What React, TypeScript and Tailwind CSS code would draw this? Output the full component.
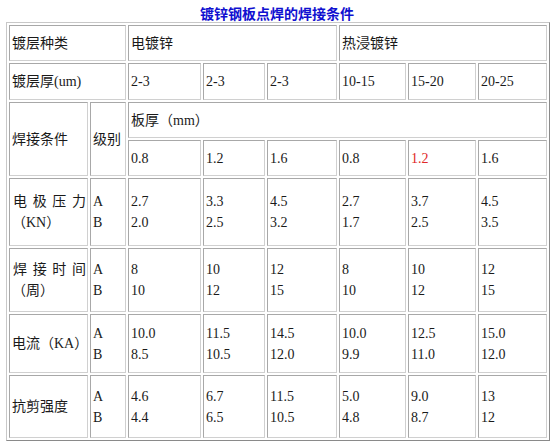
const cell =
  "flex flex-col justify-center pl-[2px] border border-t-[#a8a8a8] border-l-[#a8a8a8] border-b-[#d0d0d0] border-r-[#d0d0d0] bg-white";

const thicknesses = ["2-3", "2-3", "2-3", "10-15", "15-20", "20-25"];
const plates = ["0.8", "1.2", "1.6", "0.8", "1.2", "1.6"];

const rows = [
  { label: ["电极压力", "（KN）"], spread: true, vals: [["2.7", "2.0"], ["3.3", "2.5"], ["4.5", "3.2"], ["2.7", "1.7"], ["3.7", "2.5"], ["4.5", "3.5"]] },
  { label: ["焊接时间", "（周）"], spread: true, vals: [["8", "10"], ["10", "12"], ["12", "15"], ["8", "10"], ["10", "12"], ["12", "15"]] },
  { label: ["电流（KA）"], spread: false, vals: [["10.0", "8.5"], ["11.5", "10.5"], ["14.5", "12.0"], ["10.0", "9.9"], ["12.5", "11.0"], ["15.0", "12.0"]] },
  { label: ["抗剪强度"], spread: false, vals: [["4.6", "4.4"], ["6.7", "6.5"], ["11.5", "10.5"], ["5.0", "4.8"], ["9.0", "8.7"], ["13", "12"]] },
];

export default function App() {
  return (
    <div
      className="w-[554px] h-[445px] bg-white text-[#1a1a1a] text-[14px] leading-[21px] overflow-hidden"
      style={{ fontFamily: '"Liberation Serif", "Noto Sans CJK SC", serif' }}
    >
      <h1
        className="text-center text-[14px] font-bold text-[#1010d0] leading-[16px] pt-[5px] h-[22px]"
        style={{ fontFamily: '"Noto Sans CJK SC", sans-serif' }}
      >
        镀锌钢板点焊的焊接条件
      </h1>

      <div className="ml-[6px] w-[544px] p-[2px] border border-t-[#c8c8c8] border-l-[#c8c8c8] border-b-[#8a8a8a] border-r-[#8a8a8a] grid grid-cols-[79px_36px_73px_62px_70px_67px_68px_69px] grid-rows-[36px_37px_36px_36px_68px_64px_59px_63px] gap-[2px]">
        {/* 镀层种类 */}
        <div className={`${cell} col-span-2`}>镀层种类</div>
        <div className={`${cell} col-span-3`}>电镀锌</div>
        <div className={`${cell} col-span-3`}>热浸镀锌</div>

        {/* 镀层厚 */}
        <div className={`${cell} col-span-2`}>镀层厚(um)</div>
        {thicknesses.map((t, i) => (
          <div key={i} className={cell}>{t}</div>
        ))}

        {/* 焊接条件 header */}
        <div className={`${cell} row-span-2`}>焊接条件</div>
        <div className={`${cell} row-span-2`}>级别</div>
        <div className={`${cell} col-span-6`}>板厚（mm）</div>
        {plates.map((p, i) => (
          <div key={i} className={`${cell} ${i === 4 ? "text-[#e02828]" : ""}`}>{p}</div>
        ))}

        {rows.map((r, ri) => (
          <Row key={ri} label={r.label} spread={r.spread} vals={r.vals} />
        ))}
      </div>
    </div>
  );
}

function Row({ label, spread, vals }: { label: string[]; spread: boolean; vals: string[][] }) {
  return (
    <>
      <div className={cell}>
        {spread ? (
          <div className="flex justify-between pl-[1px] pr-[1px]">
            {label[0].split("").map((ch, i) => (
              <span key={i}>{ch}</span>
            ))}
          </div>
        ) : (
          <div className="whitespace-nowrap">{label[0]}</div>
        )}
        {label[1] && <div>{label[1]}</div>}
      </div>
      <div className={cell}>
        <div>A</div>
        <div>B</div>
      </div>
      {vals.map((v, i) => (
        <div key={i} className={cell}>
          <div>{v[0]}</div>
          <div>{v[1]}</div>
        </div>
      ))}
    </>
  );
}
